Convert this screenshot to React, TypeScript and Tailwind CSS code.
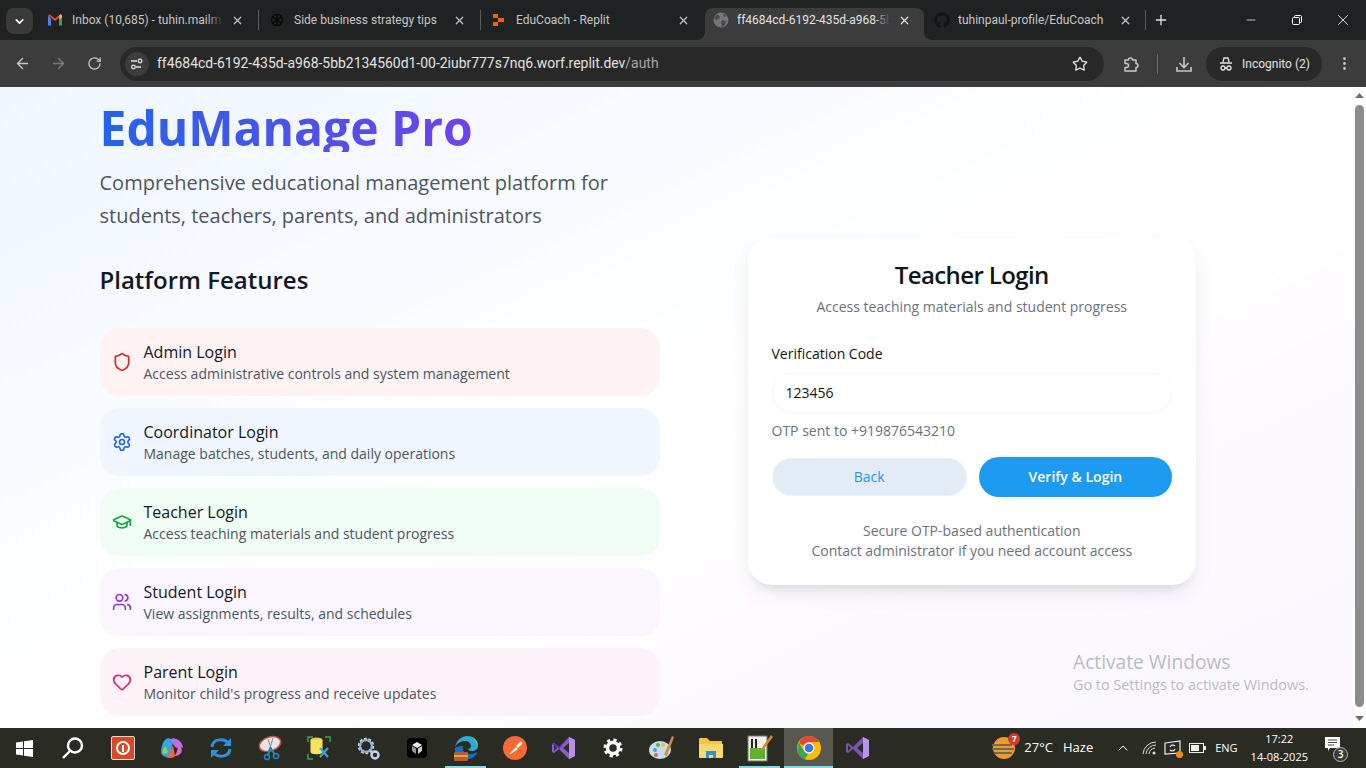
import React from "react";
import { Shield, Settings, GraduationCap, Users, Heart, ArrowLeft, ArrowRight, RotateCw, Star, X, Plus, Minus, ChevronDown, ChevronUp, MoreVertical } from "lucide-react";
import { FaGithub } from "react-icons/fa";

const features = [
  { t: "Admin Login", d: "Access administrative controls and system management", bg: "bg-[#fef2f2]", c: "text-[#dc2626]", I: Shield },
  { t: "Coordinator Login", d: "Manage batches, students, and daily operations", bg: "bg-[#eff6ff]", c: "text-[#2563eb]", I: Settings },
  { t: "Teacher Login", d: "Access teaching materials and student progress", bg: "bg-[#f0fdf4]", c: "text-[#16a34a]", I: GraduationCap },
  { t: "Student Login", d: "View assignments, results, and schedules", bg: "bg-[#faf5ff]", c: "text-[#9333ea]", I: Users },
  { t: "Parent Login", d: "Monitor child's progress and receive updates", bg: "bg-[#fdf2f8]", c: "text-[#db2777]", I: Heart },
];

function Gmail() {
  return (
    <svg width="16" height="16" viewBox="0 0 16 16">
      <path d="M1 3.500v10h3V7z" fill="#4285f4" />
      <path d="M15 3.500v10h-3V7z" fill="#34a853" />
      <path d="M1 3.500 8 9l7-5.500-1.500-1.200L8 6.500 2.500 2.300z" fill="#ea4335" />
      <path d="M12 3.500v4L15 5.500V3.500l-1.500-1.200z" fill="#fbbc04" />
    </svg>
  );
}

function Tab({ icon, title, active, sep, w, fade, ml, mr, cr }: { icon: React.ReactNode; title: string; active?: boolean; sep?: boolean; w: string; fade?: boolean; ml: string; mr: string; cr: string }) {
  return (
    <div className={`relative flex h-[32px] items-center pb-[8px] ${w} ${active ? "rounded-t-[8px] bg-[#3c3c3c]" : ""}`}>
      {active ? (
        <svg className="absolute -left-[8px] bottom-0" width="8" height="8" viewBox="0 0 8 8"><path d="M8 0v8H0a8 8 0 0 0 8-8z" fill="#3c3c3c" /></svg>
      ) : null}
      {active ? (
        <svg className="absolute -right-[8px] bottom-0" width="8" height="8" viewBox="0 0 8 8"><path d="M0 0v8h8a8 8 0 0 1-8-8z" fill="#3c3c3c" /></svg>
      ) : null}
      <div className={`flex w-[16px] shrink-0 justify-center ${ml} ${mr}`}>{icon}</div>
      <span className={`min-w-0 flex-1 overflow-hidden whitespace-nowrap text-[12px] ${active ? "text-[#e3e3e3]" : "text-[#c7c7c7]"}`}>{title}</span>
      {fade ? <div className={`h-[20px] w-[16px] -ml-[16px] ${active ? "bg-linear-to-r from-transparent to-[#3c3c3c]" : "bg-linear-to-r from-transparent to-[#1f2223]"}`} /> : null}
      <div className={`ml-[6px] flex w-[16px] shrink-0 justify-center ${cr}`}>
        <X size={13} strokeWidth={2.200} className={active ? "text-[#e3e3e3]" : "text-[#c7c7c7]"} />
      </div>
      {sep ? <div className="h-[20px] w-px shrink-0 bg-[#5a5a5a]" /> : null}
    </div>
  );
}

function Chrome() {
  return (
    <div className="shrink-0 font-['Roboto',sans-serif]">
      <div className="flex h-[40px] bg-[#1f2223] pt-[8px]">
        <div className="ml-[6px] mr-[4px] flex h-[26px] w-[27px] items-center justify-center rounded-[8px] bg-[#3a3a3a]">
          <ChevronDown size={13} strokeWidth={3} className="text-white" />
        </div>
        <Tab w="w-[222px]" ml="ml-[10px]" mr="mr-[9px]" cr="mr-[13px]" sep fade title="Inbox (10,685) - tuhin.mailme" icon={<Gmail />} />
        <Tab w="w-[222px]" ml="ml-[10px]" mr="mr-[9px]" cr="mr-[13px]" sep title="Side business strategy tips" icon={
          <svg width="16" height="16" viewBox="0 0 16 16" fill="none" stroke="#0b0b0b" strokeWidth="1.600"><circle cx="8" cy="8" r="5.500" /><path d="M4 5l8 6M12 5l-8 6M8 2v12" /></svg>
        } />
        <Tab w="w-[222px]" ml="ml-[10px]" mr="mr-[9px]" cr="mr-[12px]" title="EduCoach - Replit" icon={
          <svg width="14" height="14" viewBox="0 0 14 14" fill="#f26207"><rect x="1" y="1" width="5" height="4" /><rect x="6" y="5" width="6" height="4" /><rect x="1" y="9" width="5" height="4" /></svg>
        } />
        <div className="w-[2px]" />
        <Tab active fade w="w-[219px]" ml="ml-[8px]" mr="mr-[8px]" cr="mr-[12px]" title="ff4684cd-6192-435d-a968-5bb21" icon={
          <svg width="16" height="16" viewBox="0 0 16 16"><circle cx="8" cy="8" r="7.500" fill="#73767a" /><path d="M4 2.500 7 4 6 7 3 8 1 6zM9 8l4 1-1 4-3 2-1-4zM10 1.500 14 4l-3 1z" fill="#4a4c4f" /></svg>
        } />
        <div className="w-[2px]" />
        <Tab w="w-[220px]" ml="ml-[8px]" mr="mr-[8px]" cr="mr-[12px]" sep title="tuhinpaul-profile/EduCoach" icon={<FaGithub size={16} className="text-[#10141a]" />} />
        <div className="ml-[7px] flex h-[24px] items-center"><Plus size={16} strokeWidth={2} className="text-[#e3e3e3]" /></div>
        <div className="ml-auto flex h-[24px] items-center text-white">
          <div className="flex w-[46px] justify-center"><Minus size={14} strokeWidth={1.200} /></div>
          <div className="flex w-[46px] justify-center">
            <svg width="12" height="12" viewBox="0 0 12 12" fill="none" stroke="currentColor"><rect x="1.500" y="3.500" width="7" height="7" rx="1" /><path d="M3.500 3.500V2.500a1 1 0 0 1 1-1h5a1 1 0 0 1 1 1v5a1 1 0 0 1-1 1h-1" /></svg>
          </div>
          <div className="flex w-[46px] justify-center"><X size={18} strokeWidth={1.100} /></div>
        </div>
      </div>
      <div className="flex h-[47px] items-center bg-[#3c3c3c]">
        <div className="flex w-[44px] justify-center"><ArrowLeft size={17} className="text-[#c7c7c7]" /></div>
        <div className="flex w-[28px] justify-center"><ArrowRight size={17} className="text-[#7a7a7a]" /></div>
        <div className="flex w-[44px] justify-center"><RotateCw size={15} className="text-[#c7c7c7]" /></div>
        <div className="ml-[4px] flex h-[34px] w-[984px] items-center rounded-full bg-[#282828] pl-[5px]">
          <div className="flex h-[24px] w-[24px] items-center justify-center rounded-full bg-[#3c3c3c]">
            <svg width="14" height="14" viewBox="0 0 14 14" fill="none" stroke="#e3e3e3" strokeWidth="1.300"><path d="M1 4h6M11 10H6" /><circle cx="10" cy="4" r="1.800" /><circle cx="3.500" cy="10" r="1.800" /></svg>
          </div>
          <div className="ml-[8px] whitespace-nowrap text-[13.950px] text-[#e3e3e3]">
            ff4684cd-6192-435d-a968-5bb2134560d1-00-2iubr777s7nq6.worf.replit.dev<span className="text-[#a8a8a8]">/auth</span>
          </div>
          <Star size={16} className="ml-auto mr-[16px] text-[#e3e3e3]" />
        </div>
        <div className="ml-[17px] flex w-[20px] justify-center">
          <svg width="18" height="18" viewBox="0 0 18 18" fill="none" stroke="#c7c7c7" strokeWidth="1.500" strokeLinejoin="round"><path d="M3 5h3.500a2 2 0 0 1 4 0H14v3.500a2 2 0 0 1 0 4V16H3v-3.500h1.500a2 2 0 0 0 0-4H3z" /></svg>
        </div>
        <div className="ml-[16px] h-[20px] w-px bg-[#6a6a6a]" />
        <div className="ml-[15px] flex w-[22px] justify-center">
          <svg width="18" height="18" viewBox="0 0 18 18" fill="none" stroke="#c7c7c7" strokeWidth="1.600"><path d="M9 2v10M4.500 8 9 12.500 13.500 8M2 12v4h14v-4" /></svg>
        </div>
        <div className="ml-[11px] flex h-[34px] w-[116px] items-center justify-center gap-[8px] rounded-full bg-[#282828] text-[12px] text-[#e3e3e3]">
          <svg width="16" height="16" viewBox="0 0 16 16" fill="none" stroke="#e3e3e3" strokeWidth="1.300"><path d="M5 6l1-4h4l1 4M2 7h12" /><circle cx="5" cy="12" r="2" /><circle cx="11" cy="12" r="2" /><path d="M7 12h2" /></svg>
          Incognito (2)
        </div>
        <div className="ml-[12px] flex w-[20px] justify-center"><MoreVertical size={17} className="text-[#c7c7c7]" /></div>
      </div>
    </div>
  );
}

function Feature({ t, d, bg, c, I }: (typeof features)[number]) {
  return (
    <div className={`flex h-[68px] items-center gap-[12px] rounded-[20px] px-[12px] ${bg}`}>
      <I size={20} strokeWidth={2} className={`shrink-0 ${c}`} />
      <div>
        <div className="text-[16px] leading-[24px] font-medium text-[#111827]">{t}</div>
        <div className="text-[14px] leading-[20px] text-[#4b5563]">{d}</div>
      </div>
    </div>
  );
}

function LoginCard() {
  return (
    <div className="mt-[151px] h-[347px] w-[448px] shrink-0 rounded-[24px] bg-white pl-[23.500px] pr-[24px] pt-[21px] shadow-[0_10px_25px_-5px_rgba(0,0,0,0.10),0_8px_10px_-6px_rgba(0,0,0,0.08)]">
      <div className="text-center text-[24px] leading-[32px] font-semibold tracking-[-0.6px] text-[#0f1419]">Teacher Login</div>
      <div className="mt-[6px] text-center text-[14px] leading-[20px] text-[#6b7280]">Access teaching materials and student progress</div>
      <div className="mt-[27px] text-[14px] leading-[20px] font-medium text-[#0f1419]">Verification Code</div>
      <div className="mt-[9px] flex h-[40px] items-center rounded-[20px] border border-[#f5f6f8] bg-white px-[13px] pb-[2px] text-[14px] text-[#0f1419]">123456</div>
      <div className="mt-[8px] text-[14px] leading-[20px] text-[#6b7280]">OTP sent to +919876543210</div>
      <div className="mt-[16px] flex items-center gap-[12px]">
        <div className="flex h-[38px] flex-1 items-center justify-center rounded-[19px] border border-[#eef2f9] bg-[#e3ebf6] pb-[2px] text-[14px] font-medium text-[#1d9bf0]">Back</div>
        <div className="flex h-[40px] flex-1 items-center justify-center rounded-[20px] bg-[#1d9bf0] pb-[2px] text-[14px] font-semibold text-white">Verify &amp; Login</div>
      </div>
      <div className="mt-[24px] text-center text-[14px] leading-[20px] text-[#6b7280]">
        <div>Secure OTP-based authentication</div>
        <div>Contact administrator if you need account access</div>
      </div>
    </div>
  );
}

function Page() {
  return (
    <div className="relative flex min-h-0 flex-1 bg-white">
      <div className="relative flex min-w-0 flex-1 overflow-hidden bg-linear-to-br/srgb from-[#eff6ff] via-white to-[#faf5ff] pl-[99.500px] font-['Open_Sans',sans-serif]">
        <div className="w-[560px] shrink-0 pt-[17px]">
          <div className="bg-linear-to-r/srgb from-[#2563eb] to-[#9333ea] bg-clip-text text-[48px] leading-[48px] font-bold text-transparent">EduManage Pro</div>
          <div className="mt-[14px] text-[20px] leading-[33px] text-[#4b5563]">
            Comprehensive educational management platform for<br />students, teachers, parents, and administrators
          </div>
          <div className="mt-[32px] text-[24px] leading-[32px] font-semibold text-[#111827]">Platform Features</div>
          <div className="mt-[32px] flex flex-col gap-[12px]">
            {features.map((f) => <Feature key={f.t} {...f} />)}
          </div>
        </div>
        <div className="ml-[88.500px]"><LoginCard /></div>
        <div className="absolute left-[1073px] top-[563px] text-[#9aa0a6]/70">
          <div className="text-[19.200px] leading-[24px] font-normal">Activate Windows</div>
          <div className="text-[14.400px] leading-[22px]">Go to Settings to activate Windows.</div>
        </div>
      </div>
      <div className="flex w-[13px] shrink-0 flex-col items-center bg-white">
        <svg className="mt-[6px]" width="9" height="5" viewBox="0 0 9 5"><path d="M4.500 0 9 5H0z" fill="#6f6f6f" /></svg>
        <div className="mt-[7px] h-[602px] w-[9px] rounded-full bg-[#8c8c8c]" />
        <svg className="mt-[9px]" width="9" height="5" viewBox="0 0 9 5"><path d="M4.500 5 9 0H0z" fill="#6f6f6f" /></svg>
      </div>
    </div>
  );
}

const tb: React.ReactNode[] = [
  <svg width="17" height="17" viewBox="0 0 17 17" fill="#fff"><path d="M0 2.500 7 1.500v6.500H0zM8 1.300 17 0v8H8zM0 9h7v6.500l-7-1zM8 9h9v8l-9-1.300z" /></svg>,
  <svg width="24" height="24" viewBox="0 0 24 24" fill="none" stroke="#fff" strokeWidth="2.400"><circle cx="14" cy="9.500" r="7" /><path d="M9 15l-7 7" /></svg>,
  <div className="flex h-[24px] w-[24px] items-center justify-center rounded-[2px] border border-[#e8d9cf] bg-[#d8492a]"><div className="flex h-[14px] w-[14px] items-center justify-center rounded-full border-2 border-white"><div className="h-[7px] w-[2px] bg-white" /></div></div>,
  <svg width="24" height="24" viewBox="0 0 24 24"><path d="M6 3c3-2 6 0 7 3l-3 13c-1 3-8 3-9-3 0-5 2-11 5-13z" fill="#2fa8e0" /><path d="M10 4c2-2 4-2 6-1 4 1 7 5 7 9-1-1-4-1-7 0z" fill="#b86ee8" /><path d="M13 9l2 11c-1 2-6 3-9 1 3 0 4-5 7-12z" fill="#f4663c" /><path d="M18 8c4 2 5 8 2 10-2 2-5 2-6 2 3-2 4-8 4-12z" fill="#d86fc6" /><path d="M6 10c-3 2-4 5-3 8l5-1z" fill="#9bcb4a" /></svg>,
  <svg width="24" height="24" viewBox="0 0 24 24" fill="none" stroke="#2f8fe0" strokeWidth="3"><path d="M3 11c1-9 13-9 17-3" /><path d="M21 13c-1 9-13 9-17 3" /><path d="M22 2v8h-8z" fill="#2f8fe0" stroke="none" /><path d="M2 22v-8h8z" fill="#2f8fe0" stroke="none" /></svg>,
  <svg width="26" height="26" viewBox="0 0 26 26" fill="none"><ellipse cx="13" cy="9" rx="11" ry="7" transform="rotate(-18 13 9)" fill="#e8e4e2" stroke="#c84a4a" strokeWidth="1.500" /><path d="M11 4l3 9M16 3l-3 10" stroke="#888" /><path d="M13 12l5 8M13 13l-2 8" stroke="#1c86c8" strokeWidth="2" /><circle cx="19" cy="21" r="2.500" stroke="#1c86c8" strokeWidth="1.500" /><circle cx="10" cy="22" r="2.500" stroke="#1c86c8" strokeWidth="1.500" /></svg>,
  <svg width="24" height="24" viewBox="0 0 24 24" fill="none"><path d="M1 6V1h5M18 1h5v5M1 18v5h5" stroke="#3aa050" strokeWidth="1.500" /><ellipse cx="9.500" cy="4" rx="6" ry="2.500" fill="#e8cf50" /><path d="M3.500 4v12c0 3 12 3 12 0V4z" fill="#f7e35c" /><path d="M13 21l8-9M13 12l8 9" stroke="#3f9fd8" strokeWidth="2.200" /></svg>,
  <svg width="24" height="24" viewBox="0 0 24 24" fill="none"><circle cx="10" cy="10" r="6.500" stroke="#c5d6ea" strokeWidth="3.500" strokeDasharray="2.500 1.500" /><circle cx="10" cy="10" r="6" stroke="#8fb0d4" strokeWidth="2" /><circle cx="19" cy="19" r="3.500" stroke="#c5d6ea" strokeWidth="2.500" /></svg>,
  <div className="flex h-[20px] w-[20px] items-center justify-center rounded-[4px] bg-black"><svg width="12" height="14" viewBox="0 0 12 14"><path d="M6 1l5 3-5 3-5-3z" fill="#eee" /><path d="M1 5l4 2.500V13l-4-3z" fill="#999" /><path d="M7 7.500 11 5v5l-4 3z" fill="#ccc" /></svg></div>,
  <svg width="26" height="26" viewBox="0 0 26 26"><path d="M2 13C3 5 9 1 14 1c7 0 11 5 11 10 0 3-3 5-6 5-2 0-4-1-4-2 2 0 3-1 3-3 0-3-3-5-6-5-5 0-9 3-10 7z" fill="#2ea8d8" /><path d="M2 13c-1 5 2 10 7 11h7c4-1 7-3 8-7-3 2-8 3-11 1-3-1-4-4-3-7-4 0-7 1-8 2z" fill="#1570c4" /><path d="M19 2c3 1 6 5 6 9-1-2-3-6-6-9z" fill="#7bd36a" /><rect x="1" y="17" width="14" height="9" rx="1" fill="#b85c28" /><rect x="1" y="20" width="14" height="2" fill="#e8a040" /></svg>,
  <svg width="24" height="24" viewBox="0 0 24 24"><circle cx="12" cy="12" r="12" fill="#f76935" /><path d="M6 18l7-7 2 2-7 5zM13 10l4-4c2-1 3 1 2 2l-4 4z" fill="#fff" /></svg>,
  <svg width="24" height="24" viewBox="0 0 24 24"><path d="M17 1l6 3v16l-6 3-10-10-5 4-2-1V8l2-1 5 4z" fill="#8661c5" /><path d="M17 1l6 3v16l-6 3z" fill="#b98fe8" /><path d="M2 9v6l3-3zM17 7l-6 5 6 5z" fill="#2a2c24" /><path d="M17 1 7 11l-5-4-2 1 7 5z" fill="#5e2ca5" /></svg>,
  <svg width="20" height="20" viewBox="0 0 20 20" fill="none"><circle cx="10" cy="10" r="5.500" stroke="#fff" strokeWidth="3.500" /><circle cx="10" cy="10" r="8" stroke="#fff" strokeWidth="3" strokeDasharray="3.200 3.100" /></svg>,
  <svg width="26" height="26" viewBox="0 0 26 26"><ellipse cx="11" cy="15" rx="11" ry="9" fill="#c8dcec" /><circle cx="6" cy="15" r="2" fill="#4a9ad8" /><circle cx="9" cy="10" r="2" fill="#58b050" /><circle cx="14" cy="10" r="2" fill="#e8c040" /><circle cx="7" cy="20" r="2" fill="#e06040" /><path d="M23 1l2 1-7 19-3-1z" fill="#c89040" /></svg>,
  <svg width="24" height="22" viewBox="0 0 24 22"><path d="M0 2a1 1 0 0 1 1-1h7l3 3h12v16a1 1 0 0 1-1 1H1a1 1 0 0 1-1-1z" fill="#f5c542" /><path d="M0 7h24v13a1 1 0 0 1-1 1H1a1 1 0 0 1-1-1z" fill="#fbd96a" /><path d="M7 21v-7h10v7h-3v-3h-4v3z" fill="#2f8fe0" /></svg>,
  <svg width="26" height="28" viewBox="0 0 26 28"><rect x="1" y="2" width="19" height="25" fill="#f0f0e8" stroke="#777" /><rect x="3" y="14" width="15" height="11" fill="#60b030" /><rect x="4" y="5" width="2" height="9" fill="#222" /><rect x="8" y="5" width="2" height="9" fill="#222" /><path d="M24 1l2 2-10 13-3 2 1-3z" fill="#d08a2e" /></svg>,
  <svg width="24" height="24" viewBox="0 0 24 24"><circle cx="12" cy="12" r="12" fill="#fbbc04" /><path d="M12 0a12 12 0 0 1 10.400 6H12a6 6 0 0 0-5.600 3.800L2 6.500A12 12 0 0 1 12 0z" fill="#ea4335" /><path d="M2 6.500 7 15l.5.800a6 6 0 0 0 3.500 2.100L7.500 23.500A12 12 0 0 1 2 6.500z" fill="#34a853" /><circle cx="12" cy="12" r="5.500" fill="#fff" /><circle cx="12" cy="12" r="4.300" fill="#3b78e7" /></svg>,
  <svg width="24" height="24" viewBox="0 0 24 24"><path d="M17 1l6 3v16l-6 3-10-10-5 4-2-1V8l2-1 5 4z" fill="#7a52b8" /><path d="M17 1l6 3v16l-6 3z" fill="#b794e8" /><path d="M2 9v6l3-3zM17 7l-6 5 6 5z" fill="#2a2c24" /></svg>,
];

function Taskbar() {
  return (
    <div className="flex h-[40px] shrink-0 items-stretch bg-[#2a2c24] font-['Open_Sans',sans-serif] text-white">
      {tb.map((n, i) => (
        <div key={i} className={`relative flex shrink-0 items-center justify-center ${i === 0 ? "w-[48px]" : i === 1 ? "w-[50px]" : "w-[49px]"} ${i === 16 ? "bg-[#57584f]" : ""}`}>
          {n}
          {i === 9 || i === 15 ? <div className="absolute bottom-0 left-[4px] right-[4px] h-[2px] bg-[#7fdbe8]" /> : null}
          {i === 16 ? <div className="absolute bottom-0 left-0 right-0 h-[2px] bg-[#7fdbe8]" /> : null}
        </div>
      ))}
      <div className="ml-auto flex items-center">
        <div className="relative mr-[8px]">
          <svg width="24" height="24" viewBox="0 0 24 24"><circle cx="12" cy="12" r="11" fill="#f39a26" /><path d="M0 9h20M0 13h22M2 17h18" stroke="#6b6a5c" strokeWidth="1.800" /></svg>
          <div className="absolute -right-[4px] -top-[3px] flex h-[12px] w-[12px] items-center justify-center rounded-full bg-[#d43a32] text-[8px] font-bold">7</div>
        </div>
        <div className="text-[13px] whitespace-nowrap">27°C</div>
        <div className="ml-[10px] mr-[22px] text-[13px]">Haze</div>
        <ChevronUp size={16} strokeWidth={1.500} />
        <svg className="ml-[11px]" width="16" height="16" viewBox="0 0 16 16" fill="none" stroke="#ddd"><path d="M1 14A13 13 0 0 1 14 2M4 14a10 10 0 0 1 10-9M7 14a7 7 0 0 1 6-6" /><circle cx="12" cy="13" r="1.500" fill="#ddd" stroke="none" /></svg>
        <div className="relative ml-[6px]">
          <svg width="18" height="18" viewBox="0 0 18 18" fill="none" stroke="#eee" strokeWidth="1.200"><path d="M1 4l15-2v12l-15 1zM6 8a3 3 0 0 1 5-1M11 10a3 3 0 0 1-5 1" /></svg>
          <div className="absolute -bottom-[1px] -right-[1px] h-[7px] w-[7px] rounded-full bg-[#f08a10]" />
        </div>
        <svg className="ml-[7px]" width="17" height="12" viewBox="0 0 17 12" fill="none"><rect x="0.500" y="1.500" width="14" height="9" stroke="#eee" /><rect x="2" y="3" width="8" height="6" fill="#eee" /><rect x="15" y="4" width="2" height="4" fill="#eee" /></svg>
        <div className="ml-[9px] text-[11px]">ENG</div>
        <div className="ml-[13px] text-center text-[11px] leading-[18px]">
          <div>17:22</div>
          <div>14-08-2025</div>
        </div>
        <div className="relative ml-[16px] mr-[20px] h-[24px] w-[22px]">
          <svg width="18" height="16" viewBox="0 0 18 16"><path d="M1 1h15v11H6l-2 3v-3H1z" fill="#fff" /><path d="M4 4h9M4 6.500h9M4 9h6" stroke="#444" /></svg>
          <div className="absolute -bottom-[2px] -right-[2px] flex h-[15px] w-[15px] items-center justify-center rounded-full border border-[#bbb] bg-[#3a3c34] text-[10px] font-semibold">3</div>
        </div>
      </div>
    </div>
  );
}

export default function App() {
  return (
    <div className="flex h-[768px] w-[1366px] flex-col overflow-hidden">
      <Chrome />
      <Page />
      <Taskbar />
    </div>
  );
}
